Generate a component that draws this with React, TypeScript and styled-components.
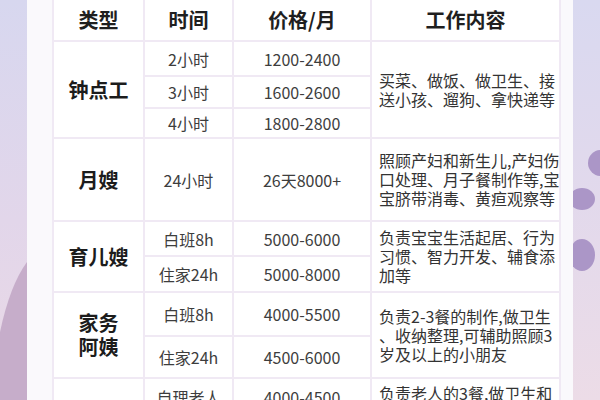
import styled, { createGlobalStyle } from "styled-components";

const GlobalStyle = createGlobalStyle`
  html, body {
    margin: 0;
    padding: 0;
    overflow: hidden;
  }
  body {
    font-family: "Noto Sans CJK SC", "Noto Sans", sans-serif;
  }
`;

const Page = styled.div`
  width: 600px;
  height: 400px;
  display: flex;
  overflow: hidden;
`;

const Strip = styled.div<{ side: "left" | "right" }>`
  width: 27px;
  flex-shrink: 0;
  background: ${(p) =>
    p.side === "left"
      ? "linear-gradient(#d7d7ef, #e2d6ea 55%, #ead9e6)"
      : "linear-gradient(#d9d9f0, #e2d9ec 50%, #ecdce7)"};
  svg {
    display: block;
  }
`;

const Card = styled.div`
  flex: 1;
  background: #faf9fc;
  padding: 0 14px 0 25px;
  overflow: hidden;
`;

const Table = styled.table`
  width: 507px;
  border-collapse: collapse;
  table-layout: fixed;
  background: #fff;
  margin-top: -3px;
`;

const Th = styled.th`
  height: 41px;
  padding: 0;
  font-size: 20px;
  font-weight: 700;
  color: #1f1f1f;
  border: 2px solid #f0e9f4;
  text-align: center;
`;

const TypeCell = styled.td`
  padding: 0;
  font-size: 20px;
  font-weight: 700;
  line-height: 24px;
  color: #1c1c1c;
  text-align: center;
  border: 2px solid #f0e9f4;
`;

const Cell = styled.td`
  padding: 0;
  font-size: 16px;
  color: #3d3d3d;
  text-align: center;
  border: 2px solid #f0e9f4;
`;

const Content = styled.td`
  padding: 0 0 0 7px;
  font-size: 16px;
  line-height: 19px;
  color: #333;
  text-align: left;
  white-space: nowrap;
  border: 2px solid #f0e9f4;
`;

type Sub = { time: string; price: string; h: number };
type Group = { type: string[]; subs: Sub[]; content: string[] };

const groups: Group[] = [
  {
    type: ["钟点工"],
    subs: [
      { time: "2小时", price: "1200-2400", h: 35 },
      { time: "3小时", price: "1600-2600", h: 32 },
      { time: "4小时", price: "1800-2800", h: 30 },
    ],
    content: ["买菜、做饭、做卫生、接", "送小孩、遛狗、拿快递等"],
  },
  {
    type: ["月嫂"],
    subs: [{ time: "24小时", price: "26天8000+", h: 83 }],
    content: ["照顾产妇和新生儿,产妇伤", "口处理、月子餐制作等,宝", "宝脐带消毒、黄疸观察等"],
  },
  {
    type: ["育儿嫂"],
    subs: [
      { time: "白班8h", price: "5000-6000", h: 35 },
      { time: "住家24h", price: "5000-8000", h: 36 },
    ],
    content: ["负责宝宝生活起居、行为", "习惯、智力开发、辅食添", "加等"],
  },
  {
    type: ["家务", "阿姨"],
    subs: [
      { time: "白班8h", price: "4000-5500", h: 44 },
      { time: "住家24h", price: "4500-6000", h: 42 },
    ],
    content: ["负责2-3餐的制作,做卫生", "、收纳整理,可辅助照顾3", "岁及以上的小朋友"],
  },
  {
    type: ["老人", "护理"],
    subs: [
      { time: "自理老人", price: "4000-4500", h: 38 },
      { time: "半自理", price: "4500-6000", h: 34 },
      { time: "不能自理", price: "6000-8000", h: 34 },
    ],
    content: [
      "负责老人的3餐,做卫生和",
      "日常起居照料,陪伴聊天",
      "、散步,协助服药、测量",
      "血压等,失能老人需协助",
      "翻身、擦洗等",
    ],
  },
];

function Lines({ lines }: { lines: string[] }) {
  return (
    <>
      {lines.map((l, i) => (
        <span key={i}>
          {l}
          {i < lines.length - 1 && <br />}
        </span>
      ))}
    </>
  );
}

function App() {
  return (
    <Page>
      <GlobalStyle />
      <Strip side="left">
        <svg width="27" height="400" viewBox="0 0 27 400">
          <path d="M27 262 Q10 285 0 332 L0 400 L27 400 Z" fill="#c6adca" />
        </svg>
      </Strip>
      <Card>
        <Table>
          <colgroup>
            <col style={{ width: 91 }} />
            <col style={{ width: 89 }} />
            <col style={{ width: 138 }} />
            <col style={{ width: 189 }} />
          </colgroup>
          <thead>
            <tr>
              <Th>类型</Th>
              <Th>时间</Th>
              <Th>价格/月</Th>
              <Th>工作内容</Th>
            </tr>
          </thead>
          <tbody>
            {groups.map((g) =>
              g.subs.map((s, i) => (
                <tr key={g.type.join("") + s.time} style={{ height: s.h }}>
                  {i === 0 && (
                    <TypeCell rowSpan={g.subs.length}>
                      <Lines lines={g.type} />
                    </TypeCell>
                  )}
                  <Cell>{s.time}</Cell>
                  <Cell>{s.price}</Cell>
                  {i === 0 && (
                    <Content rowSpan={g.subs.length}>
                      <Lines lines={g.content} />
                    </Content>
                  )}
                </tr>
              ))
            )}
          </tbody>
        </Table>
      </Card>
      <Strip side="right">
        <svg width="27" height="400" viewBox="0 0 27 400">
          <ellipse cx="28" cy="163" rx="13" ry="13" fill="#ab96c7" />
          <ellipse cx="9" cy="199" rx="13" ry="11" fill="#ab96c7" />
          <ellipse cx="9" cy="255" rx="13" ry="16" fill="#ab96c7" />
        </svg>
      </Strip>
    </Page>
  );
}

export default App;
